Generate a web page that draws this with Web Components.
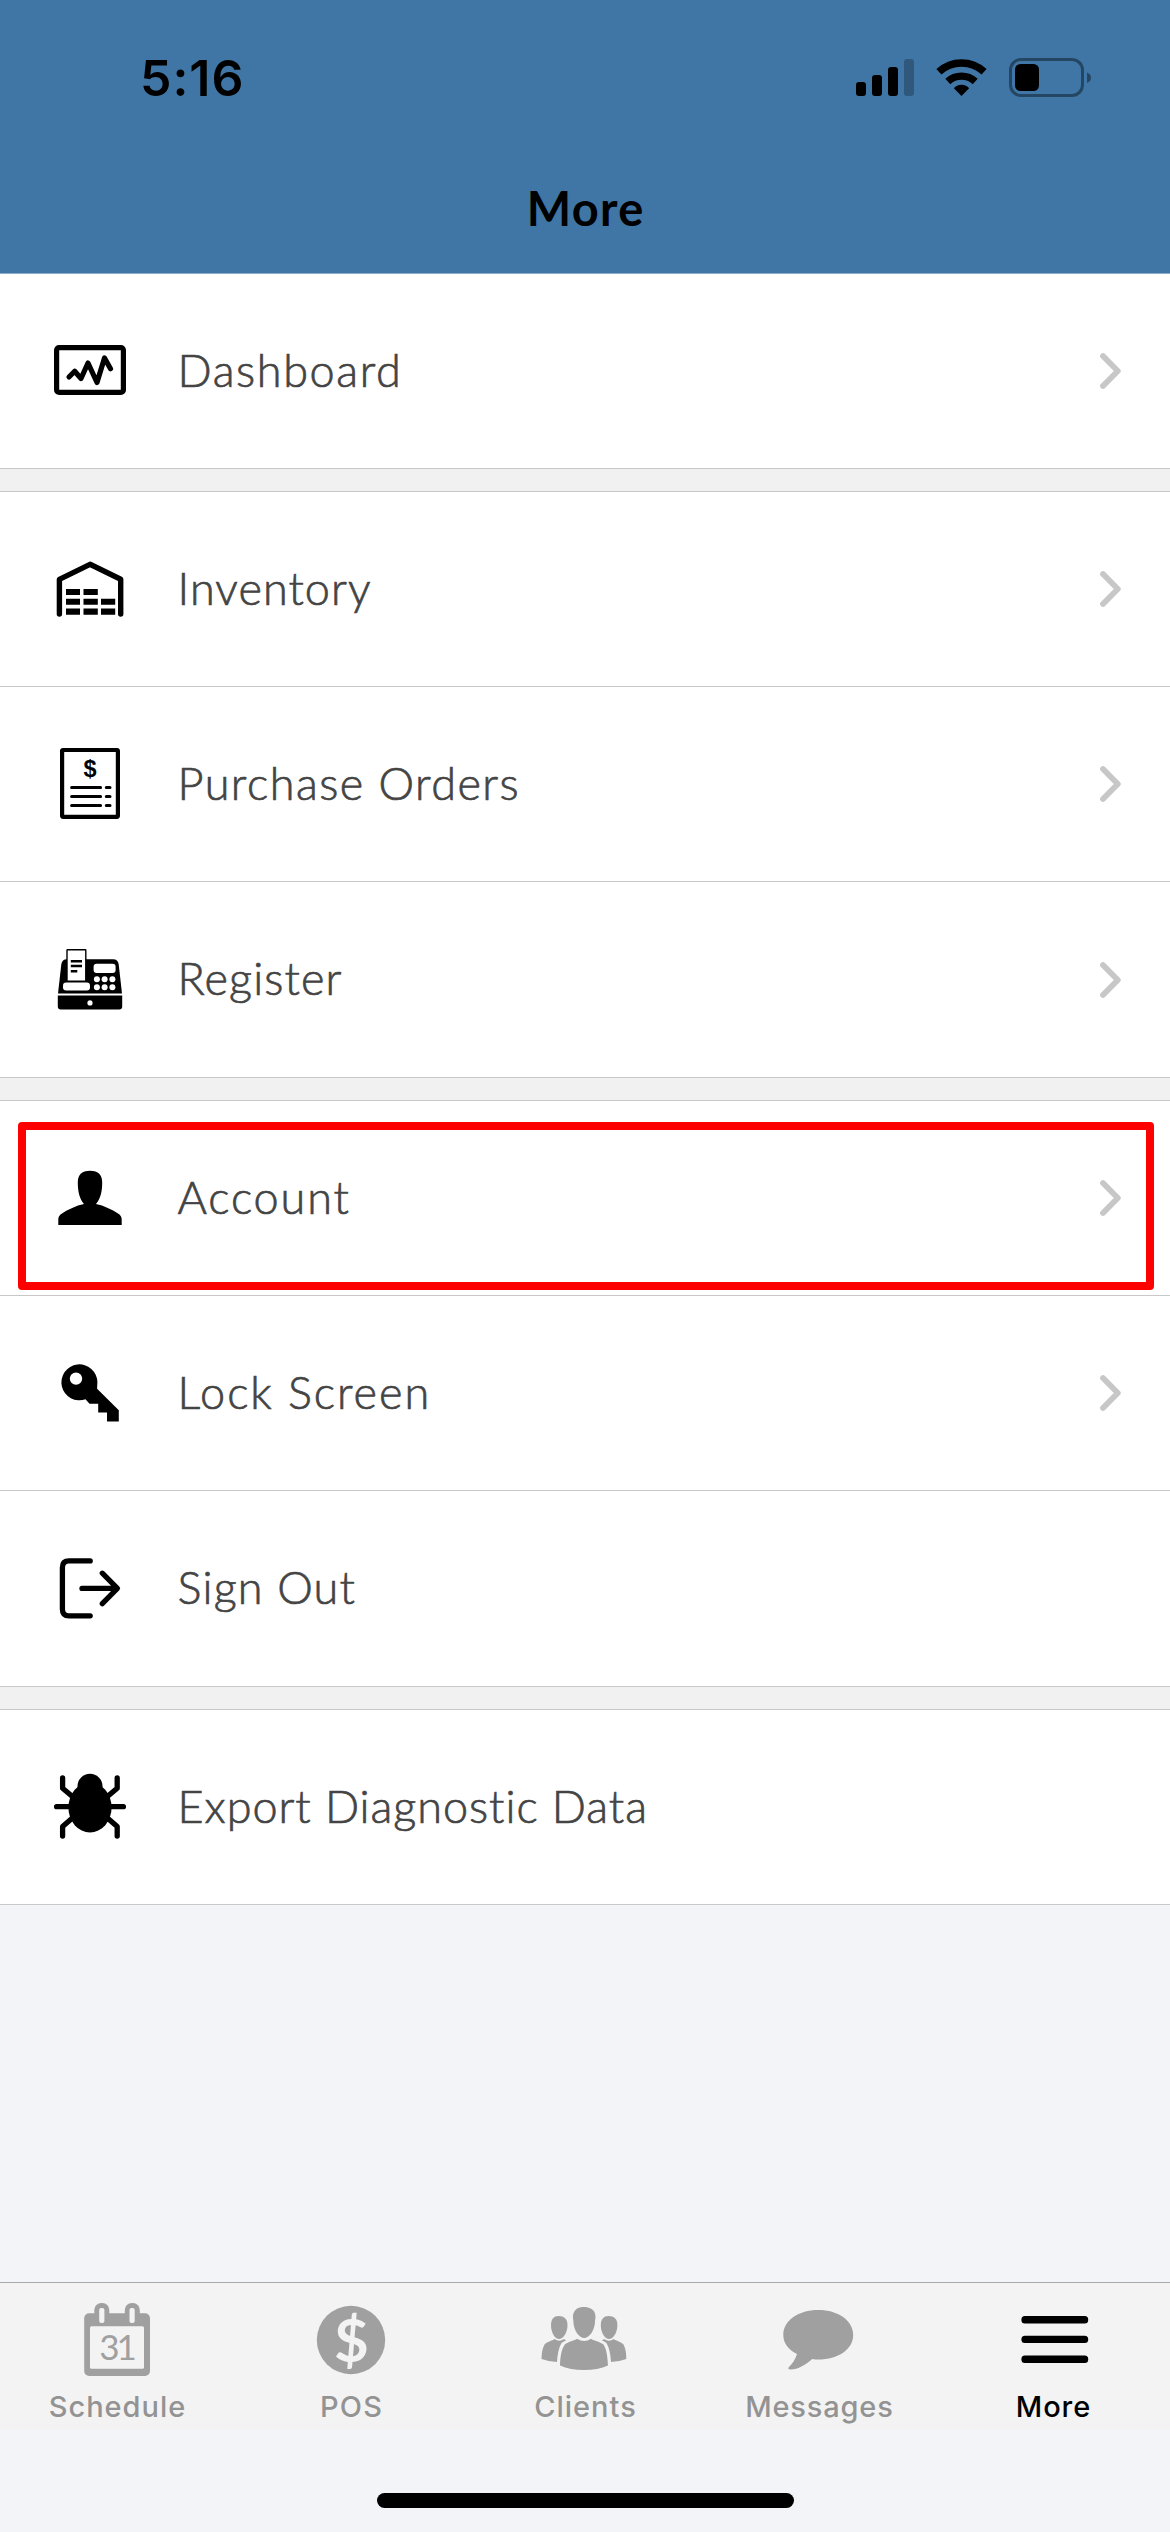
<!DOCTYPE html>
<html lang="en">
<head>
<meta charset="utf-8">
<title>More</title>
<style>
html,body{margin:0;padding:0}
body{width:1170px;height:2532px;overflow:hidden;background:#f3f4f7;font-family:Lato,"Liberation Sans",sans-serif}
</style>
</head>
<body>
<app-screen></app-screen>
<script>
function define(name, html, after) {
  const t = document.createElement('template');
  t.innerHTML = html;
  customElements.define(name, class extends HTMLElement {
    connectedCallback() {
      if (this.shadowRoot) return;
      this.attachShadow({ mode: 'open' }).appendChild(t.content.cloneNode(true));
      if (after) after(this, this.shadowRoot);
    }
  });
}

// Replaces the placeholder with the given id by a configured element.
function fill(root, id, tag, attrs) {
  const n = document.createElement(tag);
  for (const k in attrs) n.setAttribute(k, attrs[k]);
  root.getElementById(id).replaceWith(n);
}

// Text whose tracking is adjusted so the drawn glyphs span `ink` pixels.
define('fit-text', `<style>:host{display:block;white-space:nowrap}</style><span></span>`, (el, root) => {
  const span = root.querySelector('span');
  const text = el.getAttribute('text');
  span.textContent = text;
  const cs = getComputedStyle(el);
  const ctx = document.createElement('canvas').getContext('2d');
  ctx.font = `${cs.fontWeight} ${cs.fontSize} ${cs.fontFamily}`;
  const m = ctx.measureText(text);
  const natural = m.actualBoundingBoxRight + m.actualBoundingBoxLeft;
  const ls = (parseFloat(el.getAttribute('ink')) - natural) / (text.length - 1);
  span.style.letterSpacing = ls.toFixed(3) + 'px';
  span.style.marginRight = (-ls).toFixed(3) + 'px';
});

const ICONS = {
  dashboard: ['50 331 80 80', `<g fill="none" stroke="#000" stroke-width="5.2" stroke-linecap="round" stroke-linejoin="round"><rect x="56.6" y="347.6" width="66.8" height="44.8" rx="2.5"/><path d="M69 377L74.7 371.2L81 378.5L88 363L97 382.5L104.5 358L110.5 368.8"/></g>`],
  inventory: ['50 549 80 80', `<path d="M59.4 614V579.3L90 564.3L120.7 579.3V614" fill="none" stroke="#000" stroke-width="5.4" stroke-linecap="round" stroke-linejoin="round"/><path d="M66 589h14v6H66zM83.5 589h14.3v6H83.5zM66 598.7h14v6H66zM83.5 598.7h14.3v6H83.5zM101 598.7h14.2v6H101zM66 608.5h14v6.3H66zM83.5 608.5h14.3v6.3H83.5zM101 608.5h14.2v6.3H101z"/>`],
  orders: ['50 744 80 80', `<rect x="62.1" y="750" width="55.8" height="66.8" rx="1" fill="none" stroke="#000" stroke-width="4.2"/><text x="90" y="777.3" text-anchor="middle" font-family="Liberation Sans,sans-serif" font-weight="700" font-size="23.5">$</text><path d="M71.6 787.5H100.6M106.3 787.5H110M71.6 796.4H100.6M106.3 796.4H110M71.6 805.4H100.6M106.3 805.4H110" stroke="#000" stroke-width="3" stroke-linecap="round"/>`],
  register: ['50 939.5 80 80', `<path d="M58 993L61.3 964Q62 958.7 67 958.7H113Q118 958.7 118.7 964L122 993z"/><path d="M57.8 995H122.2V1006Q122.2 1009 119.2 1009H60.8Q57.8 1009 57.8 1006z"/><rect x="67" y="949.3" width="18.8" height="31.4" rx=".5" fill="#fff" stroke="#000" stroke-width="1.4"/><path d="M70.8 960.7H82M70.8 965.6H82M70.8 970.7H77.3" stroke="#000" stroke-width="2.5"/><g fill="#fff"><rect x="63" y="982" width="27" height="8" rx="3.2"/><rect x="93.6" y="963.3" width="22" height="9.2" rx="3"/><circle cx="96.9" cy="978.8" r="3"/><circle cx="104.6" cy="978.8" r="3"/><circle cx="112.4" cy="978.8" r="3"/><circle cx="96.9" cy="986.8" r="3"/><circle cx="104.6" cy="986.8" r="3"/><circle cx="112.4" cy="986.8" r="3"/><circle cx="90" cy="1002.4" r="2.6"/></g>`],
  account: ['50 1158 80 80', `<path d="M90 1170.8C81.5 1170.8 77.8 1175 77.8 1182.5C77.8 1192 79.5 1198.5 84 1204C76 1205.5 68 1209.7 62 1213.5C59.2 1215.3 58.3 1217 58.3 1219.5V1225H121.7V1219.5C121.7 1217 120.8 1215.3 118 1213.5C112 1209.7 104 1205.5 96 1204C100.5 1198.5 102.2 1192 102.2 1182.5C102.2 1175 98.5 1170.8 90 1170.8z"/>`],
  lock: ['50 1353 80 80', `<path fill-rule="evenodd" d="M97.4 1382.3A18 18 0 1 0 85.5 1399.3L89.5 1403.7H98.2V1412.5H107V1421.5H118.8V1410.3L97.1 1388.7zM82.2 1378.6a6.2 6.2 0 1 1-12.4 0a6.2 6.2 0 1 1 12.4 0z"/>`],
  signout: ['50 1548.5 80 80', `<path d="M90.2 1560.4H69Q62.4 1560.4 62.4 1567V1608.7Q62.4 1615.3 69 1615.3H90.2M82 1587.9H117M102.3 1572.7L117.4 1587.9L102.3 1603.1" fill="none" stroke="#000" stroke-width="5.3" stroke-linecap="round" stroke-linejoin="round"/>`],
  bug: ['50 1767 80 80', `<circle cx="90" cy="1786.3" r="12.5"/><ellipse cx="90" cy="1807.5" rx="21.6" ry="25"/><path d="M62.6 1778V1788.3L73 1797M117.2 1778V1788.3L106.8 1797M56.6 1806.7H123.4M62.6 1836V1826.5L73 1817.5M117.2 1836V1826.5L106.8 1817.5" fill="none" stroke="#000" stroke-width="5.3" stroke-linecap="round" stroke-linejoin="round"/>`],
  schedule: ['77 2300 80 80', `<g fill="#a0a0a0"><rect x="84.2" y="2313.3" width="65.8" height="62.7" rx="5"/><rect x="94.3" y="2303" width="15" height="26" rx="7"/><rect x="124.8" y="2303" width="15" height="26" rx="7"/></g><g fill="#f3f3f3"><rect x="90" y="2326.3" width="54" height="42.5" rx="1.5"/><rect x="99.2" y="2308" width="5.2" height="15" rx="2"/><rect x="129.5" y="2308" width="5.2" height="15" rx="2"/></g><text x="99.2" y="2360.3" textLength="37.5" lengthAdjust="spacing" font-family="Lato,sans-serif" font-size="35" fill="#a0a0a0">31</text>`],
  pos: ['311 2300 80 80', `<circle cx="351" cy="2340" r="34.2" fill="#a0a0a0"/><text x="351.3" y="2361.5" text-anchor="middle" font-family="Lato,sans-serif" font-weight="700" font-size="60" fill="#f3f3f3">$</text>`],
  clients: ['540 2300 90 80', `<g fill="#a0a0a0"><path d="M583 2307C590 2307 595.5 2309.5 595.5 2317C595.5 2319 594.8 2320 595 2322C594.5 2331 589 2338 584.2 2338C579.4 2338 573.8 2331 573.4 2322C573.6 2320 572.9 2319 572.9 2317C573 2311 577 2307 583 2307z"/><path d="M577 2338.7Q584.2 2343.5 591 2338.7C593 2340.5 600 2341.5 603.5 2344.5C607 2350 607.5 2358 608 2365.5Q598 2370 584 2370Q570 2370 560 2365.5C560.3 2358 561 2350 564.8 2344.5C568 2341.5 575 2340.5 577 2338.7z"/><path d="M608.5 2316C614 2316 617.4 2319 617.4 2325C617.4 2333 613 2339 609 2339C605 2339 600.8 2333 600.8 2325C600.8 2319 604 2316 608.5 2316z"/><path d="M558.5 2316C554 2316 551 2319 551 2325C551 2333 555 2339 559 2339C563 2339 567.5 2333 567.5 2325C567.5 2319 564 2316 558.5 2316z"/><path d="M604 2339Q609 2342.5 613.8 2339C616 2341 621 2341.5 623.5 2344.5C626 2349 626.2 2354 626.3 2359Q620 2361.5 611 2362C610.5 2355 609.5 2348 606.5 2343Q605 2341.5 602 2340.5z"/><path d="M564 2339Q559 2342.5 554.5 2339C552 2341 547 2341.5 544.5 2344.5C542 2349 541.7 2354 541.5 2359Q548 2361.5 557 2362C557.5 2355 558.5 2348 561.5 2343Q563 2341.5 566 2340.5z"/></g>`],
  messages: ['779 2300 80 80', `<path d="M818.3 2310C838 2310 853.2 2320.5 853.2 2335C853.2 2349.5 838 2359.5 818.3 2359.5Q815 2359.5 812.3 2359C806 2364.5 798 2369.5 790.5 2369.5Q787 2369 789 2367Q795 2361 797 2354C788 2349.5 783.3 2343 783.3 2335C783.3 2320.5 798.5 2310 818.3 2310z" fill="#a0a0a0"/>`],
  more: ['1013 2300 80 80', `<rect x="1021.4" y="2316" width="66.8" height="7.4" rx="3.5"/><rect x="1021.4" y="2335.7" width="66.8" height="7.4" rx="3.5"/><rect x="1021.4" y="2355.5" width="66.8" height="7.4" rx="3.5"/>`]
};
define('app-icon', `<style>:host{display:block;flex:none;line-height:0}svg{display:block}</style><div></div>`, (el, root) => {
  const [vb, body] = ICONS[el.getAttribute('name')];
  const [, , w, h] = vb.split(' ');
  root.querySelector('div').innerHTML = `<svg width="${w}" height="${h}" viewBox="${vb}">${body}</svg>`;
});

define('status-bar', `<style>
:host{display:flex;justify-content:space-between;align-items:flex-start;height:156px;box-sizing:border-box;padding:48px 76px 0 140px}
fit-text{font:600 50px/60px Inter,"Liberation Sans",sans-serif}
svg{display:block;margin-top:2px}
</style>
<fit-text text="5:16" ink="98.5"></fit-text>
<svg width="244" height="60" viewBox="850 50 244 60"><rect x="856" y="82" width="10" height="14" rx="3"/><rect x="872" y="75" width="10" height="21" rx="3"/><rect x="888" y="67" width="10" height="29" rx="3"/><rect x="904" y="59" width="10" height="37" rx="3" opacity=".25"/>
<g fill="none" stroke="#000" stroke-width="7.4"><path d="M938.9 71.8A33.3 33.3 0 0 1 984.1 71.8"/><path d="M947.8 81.4A20.3 20.3 0 0 1 975.2 81.4"/></g><path d="M961.5 96L953.9 88.3Q956.5 84.7 961.5 84.7Q966.5 84.7 969.1 88.3z"/>
<rect x="1010.5" y="59.5" width="72" height="36" rx="10.5" fill="none" stroke="#000" stroke-width="3" opacity=".4"/><path d="M1087 72.5Q1091 74 1091 77.8Q1091 81.5 1087 83z" opacity=".4"/><rect x="1015" y="64" width="24" height="27" rx="5.5"/></svg>`);

define('nav-header', `<style>
:host{display:flex;flex-direction:column;height:274px;box-sizing:border-box;background:#3f76a6;border-bottom:1px solid #8fadc8}
.t{display:flex;justify-content:center;padding-top:24px}
fit-text{font-weight:700;font-size:47px;line-height:56px}
</style><status-bar></status-bar><div class="t"><fit-text text="More" ink="112.5"></fit-text></div>`);

define('menu-row', `<style>
:host{display:flex;align-items:center;position:relative;height:194px;padding:0 43px 0 50px;background:#fff;border-bottom:1px solid #c8c8c8;color:#444}
:host([tall]){height:195px}
fit-text{margin-left:47.5px;flex:1;font-weight:300;font-size:45px;line-height:54px;padding-bottom:3px;-webkit-text-stroke:.7px #444}
.chev{flex:none}
:host([plain]) .chev{display:none}
.mark{display:none}
:host([marked]) .mark{display:block;position:absolute;left:18px;top:21px;width:1120px;height:152px;border:8px solid #f00;border-radius:4px}
</style><i id="i"></i><i id="l"></i>
<svg class="chev" width="30" height="40" viewBox="0 0 30 40"><path d="M6 5L20.8 20L6 35" fill="none" stroke="#c7c7c7" stroke-width="5.8" stroke-linecap="round" stroke-linejoin="round"/></svg><div class="mark"></div>`, (el, root) => {
  fill(root, 'i', 'app-icon', { name: el.getAttribute('icon') });
  fill(root, 'l', 'fit-text', { text: el.getAttribute('label'), ink: el.getAttribute('ink') });
});

define('menu-group', `<style>:host{display:block}:host(:not([first])){margin-top:22px;border-top:1px solid #c8c8c8}</style><slot></slot>`);

define('tab-item', `<style>
:host{flex:1;display:flex;flex-direction:column;align-items:center;padding-top:17px;color:#939393}
:host([active]){color:#000}
fit-text{font:500 29px/36px Inter,"Liberation Sans",sans-serif;margin-top:9px}
</style><i id="i"></i><i id="l"></i>`, (el, root) => {
  fill(root, 'i', 'app-icon', { name: el.getAttribute('icon') });
  fill(root, 'l', 'fit-text', { text: el.getAttribute('label'), ink: el.getAttribute('ink') });
});

define('tab-bar', `<style>:host{display:flex;height:147px;background:#f3f3f3;border-top:1px solid #aaa}</style><slot></slot>`);

define('home-indicator', `<style>:host{display:flex;justify-content:center;padding:63px 0 24px}div{width:417px;height:15px;border-radius:8px;background:#000}</style><div></div>`);

define('app-screen', `<style>
:host{display:flex;flex-direction:column;width:1170px;height:2532px;background:#f3f4f7}
.list{background:#f1f1f1;display:flow-root}
.space{flex:1}
</style>
<nav-header></nav-header>
<div class="list">
<menu-group first><menu-row icon="dashboard" label="Dashboard" ink="216.5"></menu-row></menu-group>
<menu-group><menu-row icon="inventory" label="Inventory" ink="188.5"></menu-row><menu-row icon="orders" label="Purchase Orders" ink="335"></menu-row><menu-row tall icon="register" label="Register" ink="160"></menu-row></menu-group>
<menu-group><menu-row marked icon="account" label="Account" ink="171"></menu-row><menu-row icon="lock" label="Lock Screen" ink="245"></menu-row><menu-row tall plain icon="signout" label="Sign Out" ink="175"></menu-row></menu-group>
<menu-group><menu-row plain icon="bug" label="Export Diagnostic Data" ink="463.5"></menu-row></menu-group>
</div>
<div class="space"></div>
<tab-bar>
<tab-item icon="schedule" label="Schedule" ink="134.5"></tab-item>
<tab-item icon="pos" label="POS" ink="59.5"></tab-item>
<tab-item icon="clients" label="Clients" ink="100"></tab-item>
<tab-item icon="messages" label="Messages" ink="145"></tab-item>
<tab-item active icon="more" label="More" ink="71.5"></tab-item>
</tab-bar>
<home-indicator></home-indicator>`);
</script>
</body>
</html>
